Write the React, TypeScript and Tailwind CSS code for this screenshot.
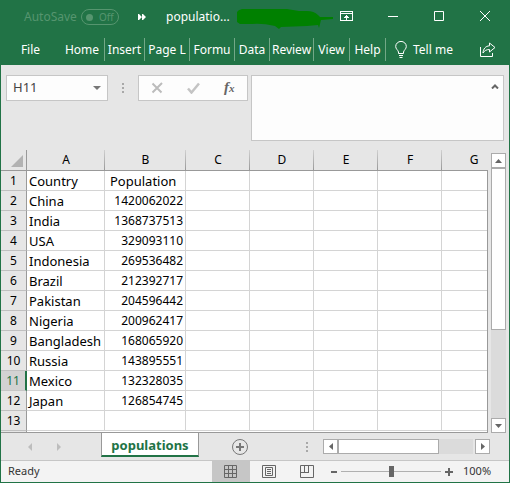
import React from 'react';

const tabs = [
  { label: 'Home', box: 'w-[45px]' },
  { label: 'Insert', box: 'w-[40px]' },
  { label: 'Page L', box: 'w-[45px]' },
  { label: 'Formu', box: 'w-[45px]' },
  { label: 'Data', box: 'w-[35px]' },
  { label: 'Review', box: 'w-[44px]' },
  { label: 'View', box: 'w-[36px]' },
  { label: 'Help', box: 'w-[36px]' },
];

const columns = ['A', 'B', 'C', 'D', 'E', 'F', 'G'];

const rows: [string, string][] = [
  ['Country', 'Population'],
  ['China', '1420062022'],
  ['India', '1368737513'],
  ['USA', '329093110'],
  ['Indonesia', '269536482'],
  ['Brazil', '212392717'],
  ['Pakistan', '204596442'],
  ['Nigeria', '200962417'],
  ['Bangladesh', '168065920'],
  ['Russia', '143895551'],
  ['Mexico', '132328035'],
  ['Japan', '126854745'],
  ['', ''],
];

const SELECTED_ROW = 11;

function TitleBar() {
  return (
    <header className="flex h-[34px] shrink-0 items-center pl-[23px] text-[12px] text-white">
      <label htmlFor="autosave" className="w-[57px] text-[#56956f]">AutoSave</label>
      <span className="relative flex h-4 w-[38px] items-center rounded-full border border-[#56956f] text-[10px] text-[#56956f]">
        <input id="autosave" type="checkbox" disabled className="absolute inset-0 appearance-none" />
        <span className="ml-1 size-[7px] rounded-full bg-[#56956f]" />
        <span className="ml-[6px]">Off</span>
      </span>
      <button aria-label="More commands" className="ml-[19px] w-7">
        <svg width="8" height="6" viewBox="0 0 8 6" fill="#fff"><path d="M0 0h1l3 3-3 3H0zM4 0h1l3 3-3 3H4z" /></svg>
      </button>
      <h1 className="w-[71px]">populatio...</h1>
      <svg className="mt-1 shrink-0" width="97" height="22" viewBox="0 0 97 22" fill="#008000">
        <path d="M0 4 Q1 2 5 1 L50 1 L62 3 L70 3 Q77 3 81 7 L83 9 L96 9 L96 11 L84 12 L82 20 L81 17 L70 18 L44 19 L42 21 L38 18 Q25 15 15 16 L3 16 L0 14Z" />
      </svg>
      <div className="mb-[2px] ml-auto flex items-center pr-[19px]">
        <button aria-label="Ribbon display options" className="mr-[35px]">
          <svg width="13" height="10" viewBox="0 0 13 10" fill="none" stroke="#fff" shapeRendering="crispEdges"><path d="M.5.5h12v9H.5zM0 2.5h13M6.5 4v5M5.5 5v1h2V5M4.5 6v1M8.5 6v1" /></svg>
        </button>
        <button aria-label="Minimize" className="mr-9"><svg width="10" height="10"><path d="M0 5.5h10" stroke="#fff" /></svg></button>
        <button aria-label="Maximize" className="mr-9"><svg width="10" height="10"><path d="M.5.5h9v9h-9z" stroke="#fff" fill="none" /></svg></button>
        <button aria-label="Close"><svg width="10" height="10"><path d="M0 0l10 10M10 0L0 10" stroke="#fff" /></svg></button>
      </div>
    </header>
  );
}

function RibbonTabs() {
  return (
    <nav className="flex h-[31px] shrink-0 items-center text-[12px] text-white">
      <button className="w-[59px]">File</button>
      {tabs.map((tab) => (
        <button key={tab.label} className={`${tab.box} h-[23px] shrink-0 border-r border-[#73a887] text-center whitespace-nowrap`}>
          {tab.label}
        </button>
      ))}
      <button className="ml-[9px] flex items-center gap-[6px] whitespace-nowrap">
        <svg width="12" height="17" viewBox="0 0 12 17" fill="none" stroke="#fff"><path d="M3.500 12.500V11C3 9 .7 8 .7 5.500a5.200 5 0 0 1 10.600 0C11.300 8 9 9 8.500 11v1.500zM4 14.500h4M4.500 16.500h3" /></svg>
        Tell me
      </button>
      <button aria-label="Share" className="mr-[13px] ml-auto">
        <svg width="16" height="15" viewBox="0 0 16 15" fill="none" stroke="#fff"><path d="M.5 5v9.500h12V11M9.500 1l5.500 4.500L9.500 10V7.500C6.500 7.500 4.500 8.500 3 11c.2-4 2.500-7 6.500-7.200z" /></svg>
      </button>
    </nav>
  );
}

function Dots({ className }: { className?: string }) {
  return (
    <span className={`flex flex-col gap-[2px] ${className ?? ''}`}>
      <i className="size-[2px] bg-[#a8a8a8]" />
      <i className="size-[2px] bg-[#a8a8a8]" />
      <i className="size-[2px] bg-[#a8a8a8]" />
    </span>
  );
}

function FormulaBar() {
  return (
    <section className="flex h-[85px] shrink-0 items-start pt-[10px] pr-[5px] pl-[5px]">
      <div className="flex h-[26px] w-[102px] shrink-0 items-center border border-[#c6c6c6] bg-[#fdfdfd]">
        <input aria-label="Name box" defaultValue="H11" className="w-[86px] pl-[6px] text-[13px] text-[#444] outline-none" />
        <button aria-label="Named ranges"><svg width="8" height="4"><path d="M0 0h8L4 4z" fill="#777" /></svg></button>
      </div>
      <Dots className="mt-2 ml-[14px]" />
      <div className="ml-[14px] flex h-[26px] w-[110px] shrink-0 items-center border border-[#c6c6c6] bg-[#fdfdfd] pl-3">
        <button aria-label="Cancel"><svg width="13" height="12" viewBox="0 0 13 12"><path d="M1.500 1.500l9 9M11 1L1.500 10.500" stroke="#bcbcbc" strokeWidth="2" /></svg></button>
        <button aria-label="Enter" className="ml-[23px]"><svg width="13" height="12" viewBox="0 0 13 12"><path d="M1 6.500l3.500 4L12 1.500" fill="none" stroke="#c4c4c4" strokeWidth="2.500" /></svg></button>
        <button aria-label="Insert function" className="mb-[2px] ml-6 font-['Liberation_Serif',serif] text-[15px] leading-4 font-bold text-[#666] italic">f<span className="text-[11px]">x</span></button>
      </div>
      <div className="ml-[3px] flex h-[66px] min-w-0 flex-1 border border-[#c6c6c6] bg-[#fdfdfd]">
        <textarea aria-label="Formula" className="min-w-0 flex-1 resize-none outline-none" />
        <button aria-label="Collapse formula bar" className="mt-2 mr-1 self-start"><svg width="8" height="5" viewBox="0 0 8 5" className="block"><path d="M1 4.500L4 1.500l3 3" fill="none" stroke="#666" strokeWidth="2" /></svg></button>
      </div>
    </section>
  );
}

function Sheet() {
  return (
    <div className="relative min-w-0 flex-1 overflow-hidden border-b border-[#999]">
      <table className="h-full w-[505px] table-fixed border-separate border-spacing-0 bg-white font-['Noto_Sans',sans-serif] text-[13px] leading-4 text-black">
        <colgroup>
          <col className="w-[26px]" />
          <col className="w-[78px]" />
          <col className="w-[81px]" />
          <col span={5} className="w-[64px]" />
        </colgroup>
        <thead>
          <tr className="h-[21px] bg-[#e6e6e6]">
            <td className="border-r border-b border-[#999] p-0 align-bottom">
              <svg className="mb-[3px] ml-[10px] block" width="12" height="12"><path d="M12 0v12H0z" fill="#b2b2b2" /></svg>
            </td>
            {columns.map((name) => (
              <th key={name} scope="col" className="border-b border-b-[#999] bg-[linear-gradient(to_bottom,#d0d0d0,#999)] bg-[length:1px_100%] bg-right bg-no-repeat p-0 text-[12px] font-normal">{name}</th>
            ))}
          </tr>
        </thead>
        <tbody>
          {rows.map(([country, population], i) => {
            const selected = i + 1 === SELECTED_ROW;
            return (
              <tr key={i} className="h-5">
                <th scope="row" className={`p-0 text-[12px] font-normal ${selected ? 'border-r-2 border-b border-r-[#217346] border-b-[#c6c6c6] bg-[#d2d2d2] text-[#217346]' : 'border-r border-b border-r-[#999] border-b-[#c0c0c0] bg-[#e6e6e6]'}`}>{i + 1}</th>
                <td className="border-r border-b border-[#d4d4d4] p-0 pl-[2px] whitespace-nowrap">{country}</td>
                <td className={`border-r border-b border-[#d4d4d4] p-0 ${i === 0 ? 'pl-[5px]' : 'pr-[2px] text-right text-[12px]'}`}>{population}</td>
                {columns.slice(2).map((name) => (
                  <td key={name} className="border-r border-b border-[#d4d4d4] p-0" />
                ))}
              </tr>
            );
          })}
          <tr><td className="border-r border-[#999] bg-[#e6e6e6] p-0" /><td colSpan={7} className="p-0" /></tr>
        </tbody>
      </table>
      <span className="absolute top-5 right-0 bottom-0 w-px bg-[#999]" />
    </div>
  );
}

const scrollButton = 'flex size-[15px] shrink-0 items-center justify-center border border-[#ababab] bg-white';

function VerticalScroll() {
  return (
    <div className="mx-[3px] flex w-[15px] shrink-0 flex-col bg-[#dbdbdb]">
      <div className="h-[3px] bg-[#e6e6e6]" />
      <button aria-label="Scroll up" className={scrollButton}><svg width="7" height="4"><path d="M0 4h7L3.500 0z" fill="#666" /></svg></button>
      <div className="h-[162px] border border-[#ababab] bg-white" />
      <button aria-label="Scroll down" className={`${scrollButton} mt-auto`}><svg width="7" height="4"><path d="M0 0h7L3.500 4z" fill="#666" /></svg></button>
    </div>
  );
}

function SheetTabs() {
  return (
    <div className="flex h-[27px] shrink-0">
      <div className="flex w-[100px] items-center pl-[27px]">
        <button aria-label="Previous sheet" disabled><svg width="4" height="8"><path d="M4 0v8L0 4z" fill="#bdbdbd" /></svg></button>
        <button aria-label="Next sheet" disabled className="ml-[25px]"><svg width="4" height="8"><path d="M0 0v8l4-4z" fill="#bdbdbd" /></svg></button>
      </div>
      <button className="-mt-px h-[25px] w-[98px] border-x border-b-2 border-x-[#999] border-b-[#217346] bg-white pt-1 text-[13px] font-bold text-[#217346]">populations</button>
      <button aria-label="New sheet" className="ml-8">
        <svg width="18" height="18" fill="none" stroke="#777"><circle cx="9" cy="9" r="7.500" /><path d="M9 5v8M5 9h8" strokeWidth="2" /></svg>
      </button>
      <div className="ml-auto flex items-center pr-[19px]">
        <Dots className="mr-[15px]" />
        <button aria-label="Scroll left" className={scrollButton}><svg width="4" height="7"><path d="M4 0v7L0 3.500z" fill="#666" /></svg></button>
        <div className="flex h-[15px] w-[135px] bg-[#dbdbdb]"><div className="w-[101px] border border-[#ababab] bg-white" /></div>
        <button aria-label="Scroll right" className={`${scrollButton} ml-[2px]`}><svg width="4" height="7"><path d="M0 0v7l4-3.500z" fill="#666" /></svg></button>
      </div>
    </div>
  );
}

function StatusBar() {
  return (
    <footer className="flex h-[22px] shrink-0 items-center border-t border-[#c6c6c6] bg-[#f3f3f3] pl-[7px] text-[11px] text-[#333]">
      <span>Ready</span>
      <div className="ml-auto flex h-full items-center">
        <button aria-label="Normal view" className="flex h-full w-[38px] items-center justify-center bg-[#c6c6c6] pr-[2px]">
          <svg width="13" height="13" fill="none" stroke="#666"><path d="M.5.5h12v12H.5zM4.500 0v13M8.500 0v13M0 4.500h13M0 8.500h13" /></svg>
        </button>
        <button aria-label="Page layout view" className="ml-3">
          <svg className="block" width="14" height="13" fill="none" stroke="#666"><path d="M.5.5h13v12H.5zM3.500 2.500h7v8h-7zM5 4.500h4M5 6.500h4M5 8.500h4" /></svg>
        </button>
        <button aria-label="Page break preview" className="ml-6">
          <svg className="block" width="14" height="13" fill="none" stroke="#666"><path d="M.5.5h13v12H.5zM4.500 0v7M8.500 0v7M0 7.500h9" /></svg>
        </button>
        <button aria-label="Zoom out" className="ml-[17px]"><svg className="block" width="6" height="6"><path d="M0 3h6" stroke="#666" strokeWidth="2" /></svg></button>
        <input
          aria-label="Zoom"
          type="range"
          min={0}
          max={200}
          defaultValue={101}
          className="mx-1 h-[11px] w-[100px] appearance-none bg-[linear-gradient(#b0b0b0,#b0b0b0)] bg-[length:100%_1px] bg-center bg-no-repeat [&::-webkit-slider-thumb]:h-[11px] [&::-webkit-slider-thumb]:w-[5px] [&::-webkit-slider-thumb]:appearance-none [&::-webkit-slider-thumb]:bg-[#666]"
        />
        <button aria-label="Zoom in"><svg className="block" width="8" height="8"><path d="M0 4h8M4 0v8" stroke="#666" strokeWidth="2" /></svg></button>
        <button className="ml-[10px] w-[46px] text-left">100%</button>
      </div>
    </footer>
  );
}

export default function App() {
  return (
    <main className="flex h-screen flex-col overflow-hidden border-x border-b border-[#217346] bg-[#e6e6e6] font-['Noto_Sans',sans-serif]">
      <div className="shrink-0 bg-[#217346]">
        <TitleBar />
        <RibbonTabs />
      </div>
      <FormulaBar />
      <div className="flex min-h-0 flex-1">
        <Sheet />
        <VerticalScroll />
      </div>
      <SheetTabs />
      <StatusBar />
    </main>
  );
}
